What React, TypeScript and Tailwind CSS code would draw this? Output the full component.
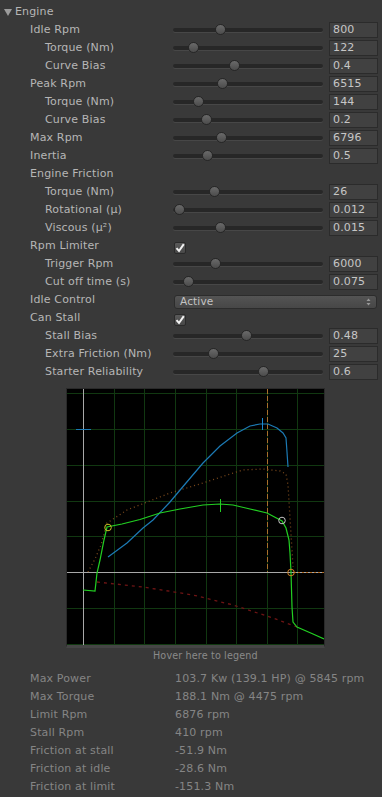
import React from "react";

type Row =
  | { kind: "slider"; label: string; indent: 1 | 2; value: string; thumb: number }
  | { kind: "label"; label: string; indent: 1 | 2 }
  | { kind: "check"; label: string; indent: 1 | 2 }
  | { kind: "select"; label: string; indent: 1 | 2; value: string };

// thumb = center x of the knob in page pixels
const rows: Row[] = [
  { kind: "slider", label: "Idle Rpm", indent: 1, value: "800", thumb: 220 },
  { kind: "slider", label: "Torque (Nm)", indent: 2, value: "122", thumb: 193 },
  { kind: "slider", label: "Curve Bias", indent: 2, value: "0.4", thumb: 234 },
  { kind: "slider", label: "Peak Rpm", indent: 1, value: "6515", thumb: 222 },
  { kind: "slider", label: "Torque (Nm)", indent: 2, value: "144", thumb: 198 },
  { kind: "slider", label: "Curve Bias", indent: 2, value: "0.2", thumb: 206 },
  { kind: "slider", label: "Max Rpm", indent: 1, value: "6796", thumb: 221 },
  { kind: "slider", label: "Inertia", indent: 1, value: "0.5", thumb: 207 },
  { kind: "label", label: "Engine Friction", indent: 1 },
  { kind: "slider", label: "Torque (Nm)", indent: 2, value: "26", thumb: 214 },
  { kind: "slider", label: "Rotational (μ)", indent: 2, value: "0.012", thumb: 179 },
  { kind: "slider", label: "Viscous (μ²)", indent: 2, value: "0.015", thumb: 220 },
  { kind: "check", label: "Rpm Limiter", indent: 1 },
  { kind: "slider", label: "Trigger Rpm", indent: 2, value: "6000", thumb: 215 },
  { kind: "slider", label: "Cut off time (s)", indent: 2, value: "0.075", thumb: 188 },
  { kind: "select", label: "Idle Control", indent: 1, value: "Active" },
  { kind: "check", label: "Can Stall", indent: 1 },
  { kind: "slider", label: "Stall Bias", indent: 2, value: "0.48", thumb: 246 },
  { kind: "slider", label: "Extra Friction (Nm)", indent: 2, value: "25", thumb: 213 },
  { kind: "slider", label: "Starter Reliability", indent: 2, value: "0.6", thumb: 263 },
];

const stats = [
  ["Max Power", "103.7 Kw (139.1 HP) @ 5845 rpm"],
  ["Max Torque", "188.1 Nm @ 4475 rpm"],
  ["Limit Rpm", "6876 rpm"],
  ["Stall Rpm", "410 rpm"],
  ["Friction at stall", "-51.9 Nm"],
  ["Friction at idle", "-28.6 Nm"],
  ["Friction at limit", "-151.3 Nm"],
];

function Slider({ thumb }: { thumb: number }) {
  return (
    <div className="relative h-[18px] w-[150px]">
      <div className="absolute left-0 right-0 top-[7px] h-[4px] rounded-full bg-[#272727] shadow-[0_1px_0_#474747]" />
      <div
        className="absolute top-[3px] h-[11px] w-[11px] rounded-full border border-[#262626] bg-gradient-to-b from-[#6a6a6a] to-[#4c4c4c]"
        style={{ left: thumb - 173 - 5.5 }}
      />
    </div>
  );
}

function Field({ value }: { value: string }) {
  return (
    <div className="ml-[6px] flex h-[16px] w-[49px] items-center border border-[#2b2b2b] bg-[#414141] pl-[3px] pt-[1px] text-[#c6c6c6]">
      {value}
    </div>
  );
}

function Check() {
  return (
    <div className="mt-[5px] ml-[1px] flex h-[12px] w-[12px] items-center justify-center self-start rounded-[2px] border border-[#2a2a2a] bg-gradient-to-b from-[#5a5a5a] to-[#484848]">
      <svg width="10" height="10" viewBox="0 0 10 10">
        <path d="M1.5 5.2 L4 8 L8.8 1.2" fill="none" stroke="#f2f2f2" strokeWidth="2" />
      </svg>
    </div>
  );
}

function Select({ value }: { value: string }) {
  return (
    <div className="mt-[4px] ml-[1px] flex h-[14px] w-[203px] items-center justify-between self-start rounded-[3px] border border-[#2c2c2c] bg-gradient-to-b from-[#545454] to-[#474747] pl-[5px] pr-[5px] text-[10.5px] text-[#c4c4c4]">
      <span>{value}</span>
      <svg width="5" height="8" viewBox="0 0 5 8">
        <path d="M2.5 0.5 L4.5 3 L0.5 3 Z M0.5 5 L4.5 5 L2.5 7.5 Z" fill="#9a9a9a" />
      </svg>
    </div>
  );
}

function Graph() {
  const vgrid = [114, 144, 175, 206, 236, 267, 297];
  const hgrid = [393, 429, 465, 501, 536, 608, 644];
  return (
    <div className="ml-[66px] mt-[7px] w-[259px] border border-b-[3px] border-[#2a2a2a] border-b-[#454545] bg-black">
      <svg width="257" height="256" viewBox="67 389 257 256" className="block">
        <g stroke="#113811" strokeWidth="1" shapeRendering="crispEdges">
          {vgrid.map((x) => (
            <line key={x} x1={x + 0.5} y1={389} x2={x + 0.5} y2={645} />
          ))}
          {hgrid.map((y) => (
            <line key={y} x1={67} y1={y + 0.5} x2={324} y2={y + 0.5} />
          ))}
        </g>
        <g stroke="#a8a8a8" strokeWidth="1" shapeRendering="crispEdges">
          <line x1={83.5} y1={389} x2={83.5} y2={645} />
          <line x1={67} y1={572.5} x2={324} y2={572.5} />
        </g>
        {/* rpm marker */}
        <line x1={267.5} y1={389} x2={267.5} y2={572} stroke="#a8702c" strokeDasharray="5 2" shapeRendering="crispEdges" />
        {/* friction */}
        <path
          d="M97 582 L143 587 L193 595 L233 605 L273 618 L297 627"
          fill="none"
          stroke="#6e1414"
          strokeWidth="1.3"
          strokeDasharray="3 4"
        />
        {/* torque + friction dotted */}
        <path
          d="M88 572 L95 559 L101 545 L107 523 L127 510 L170 493 L203 483 L230 474 L243 470 L263 469 L280 471 L286 474 L288 485 L290 518 L292 550 L293 567"
          fill="none"
          stroke="#7c4a1c"
          strokeWidth="1.3"
          strokeDasharray="1 3"
        />
        <line x1={294} y1={572.5} x2={324} y2={572.5} stroke="#b06a22" strokeDasharray="2 2" />
        {/* power */}
        <path
          d="M108 557 L127 543 L143 528 L153 520 L170 502 L186 483 L203 463 L220 446 L237 433 L250 426 L260 424 L268 424 L277 428 L283 433 L286 438 L287 452 L288 467"
          fill="none"
          stroke="#1c7ab4"
          strokeWidth="1.2"
        />
        <line x1={76} y1={429.5} x2={91} y2={429.5} stroke="#1c7ab4" shapeRendering="crispEdges" />
        <line x1={262.5} y1={418} x2={262.5} y2={430} stroke="#1c8ad0" shapeRendering="crispEdges" />
        {/* torque */}
        <path
          d="M83 590 L95 591 L97 573 L100 560 L104 540 L107 527 L122 524 L140 519.5 L160 513 L180 509 L203 505 L220 504 L233 505 L250 509 L267 513 L282 521 L286 528 L289 540 L290 553 L291 572 L292 607 L293 622 L297 627 L313 634 L324 639"
          fill="none"
          stroke="#22d022"
          strokeWidth="1.2"
        />
        <line x1={220.5} y1={499} x2={220.5} y2={512} stroke="#22d022" shapeRendering="crispEdges" />
        <circle cx={108} cy={527.5} r={3.3} fill="none" stroke="#c8c024" />
        <circle cx={282} cy={520.5} r={3.3} fill="none" stroke="#c4c4c4" />
        <circle cx={291} cy={572.5} r={3.3} fill="none" stroke="#d08024" />
      </svg>
    </div>
  );
}

export default function App() {
  return (
    <div className="h-[797px] w-[382px] overflow-hidden bg-[#393939] pt-[3px] font-['DejaVu_Sans',sans-serif] text-[11px] tracking-[0.15px] text-[#b6b6b6]">
      <div className="flex h-[18px] items-center pl-[4px]">
        <svg width="8" height="7" viewBox="0 0 8 7">
          <path d="M0 0 L8 0 L4 7 Z" fill="#9c9c9c" />
        </svg>
        <span className="ml-[3px] pt-[1px]">Engine</span>
      </div>
      {rows.map((r, i) => (
        <div key={i} className="flex h-[18px] items-center">
          <div className={`w-[173px] shrink-0 whitespace-nowrap pt-[1px] ${r.indent === 1 ? "pl-[30px]" : "pl-[45px]"}`}>
            {r.label}
          </div>
          {r.kind === "slider" && (
            <>
              <Slider thumb={r.thumb} />
              <Field value={r.value} />
            </>
          )}
          {r.kind === "check" && <Check />}
          {r.kind === "select" && <Select value={r.value} />}
        </div>
      ))}
      <Graph />
      <div className="flex h-[16px] items-center pl-[153px] pt-[1px] text-[9.6px] text-[#8a8a8a]">Hover here to legend</div>
      <div className="mt-[6px] text-[#858585]">
        {stats.map(([k, v]) => (
          <div key={k} className="flex h-[18px] items-center">
            <div className="w-[175px] shrink-0 pl-[30px]">{k}</div>
            <div className="whitespace-nowrap">{v}</div>
          </div>
        ))}
      </div>
    </div>
  );
}
